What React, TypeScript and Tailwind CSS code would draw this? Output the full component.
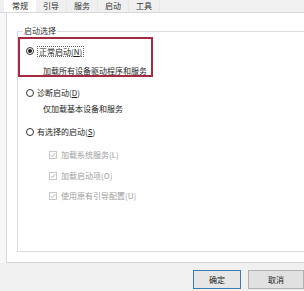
const font = { fontFamily: '"Noto Sans CJK SC", "Noto Sans", sans-serif' }

const tabs = ['常规', '引导', '服务', '启动', '工具']

function Radio({ checked }: { checked?: boolean }) {
  return (
    <span className="flex h-[8px] w-[8px] shrink-0 items-center justify-center rounded-full border border-[#333] bg-white">
      {checked && <span className="h-[4px] w-[4px] rounded-full bg-[#222]" />}
    </span>
  )
}

function Check({ label }: { label: string }) {
  return (
    <div className="flex h-[12px] items-center gap-[4px] pl-[31px]">
      <span className="flex h-[8px] w-[8px] shrink-0 items-center justify-center border border-[#c8c8c8] bg-white">
        <svg viewBox="0 0 8 8" className="h-[6px] w-[6px]">
          <path d="M1 4.2 L3 6.2 L7 1.6" fill="none" stroke="#a8a8a8" strokeWidth="1.1" />
        </svg>
      </span>
      <span className="text-[#a0a0a0]">{label}</span>
    </div>
  )
}

export default function App() {
  return (
    <div
      className="flex h-[291px] w-[304px] flex-col overflow-hidden bg-[#f7f7f7] text-[8px] leading-[12px] text-[#1e1e1e]"
      style={font}
    >
      {/* tab strip */}
      <div className="flex h-[13px] shrink-0 items-end border-b border-[#d8d8d8] bg-[#f0f0f0] pl-[4px]">
        {tabs.map((t, i) => (
          <div
            key={t}
            className={
              i === 0
                ? 'flex h-[13px] w-[32px] items-center justify-center bg-white'
                : 'flex h-[12px] w-[31px] items-center justify-center border-r border-[#e8e8e8] text-[#333]'
            }
          >
            {t}
          </div>
        ))}
      </div>

      {/* page */}
      <div className="ml-[6px] h-[250px] shrink-0 border-b border-l border-[#d8d8d8] bg-white pl-[10px] pt-[13px]">
        <fieldset className="h-[226px] w-[320px] border border-[#dcdcdc] px-0">
          <legend className="ml-[5px] px-[1px] text-[8px] leading-[10px] text-[#333]">启动选择</legend>

          <div className="mt-[1px] h-[40px] w-[135px] border-2 border-[#a52a3f] pl-[6px] pt-[6px]">
            <div className="flex h-[12px] items-center gap-[3px]">
              <Radio checked />
              <span className="border border-dotted border-[#666] px-[1px] leading-[9px]">
                正常启动(<span className="underline">N</span>)
              </span>
            </div>
            <div className="mt-[8px] pl-[17px]">加载所有设备驱动程序和服务</div>
          </div>

          <div className="mt-[10px] flex h-[12px] items-center gap-[3px] pl-[8px]">
            <Radio />
            <span>
              诊断启动(<span className="underline">D</span>)
            </span>
          </div>
          <div className="mt-[4px] pl-[25px]">仅加载基本设备和服务</div>

          <div className="mt-[11px] flex h-[12px] items-center gap-[3px] pl-[8px]">
            <Radio />
            <span>
              有选择的启动(<span className="underline">S</span>)
            </span>
          </div>

          <div className="mt-[11px] flex flex-col gap-[8.5px]">
            <Check label="加载系统服务(L)" />
            <Check label="加载启动项(O)" />
            <Check label="使用原有引导配置(U)" />
          </div>
        </fieldset>
      </div>

      {/* footer */}
      <div className="flex flex-1 items-start bg-[#f0f0f0] pl-[193px] pt-[7px]">
        <button className="h-[19px] w-[56px] border border-[#3d7ab5] bg-[#e6e6e6] text-[8px] text-[#222]">
          确定
        </button>
        <button className="ml-[7px] h-[19px] w-[56px] shrink-0 border border-[#b0b0b0] bg-[#e1e1e1] text-[8px] text-[#222]">
          取消
        </button>
      </div>
    </div>
  )
}
